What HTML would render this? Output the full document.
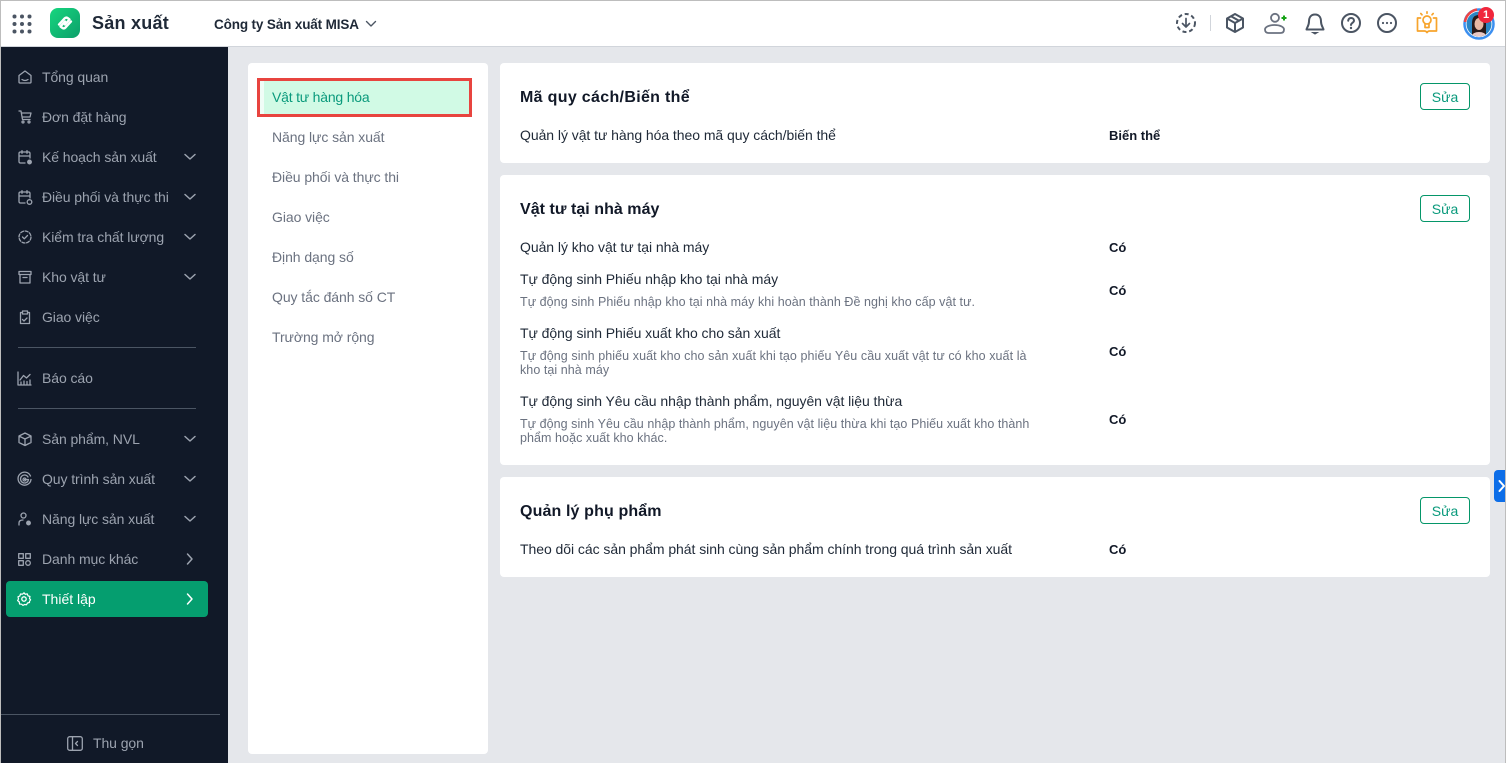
<!DOCTYPE html>
<html lang="vi"><head><meta charset="utf-8"><title>Sản xuất</title>
<style>
html,body{margin:0;padding:0}
body{width:1506px;height:763px;overflow:hidden;position:relative;background:#e5e7eb;font-family:"Liberation Sans",sans-serif;font-size:14px;color:#1f2937}
.a{position:absolute;white-space:nowrap;line-height:16px}
.box{position:absolute}
.side{color:#9ca3af;letter-spacing:-.08px;left:42px}
.sub{color:#6b7280;font-size:12.5px;letter-spacing:.06px;left:520px;line-height:14px}
.lbl{color:#1f2937;letter-spacing:-.05px;left:520px}
.val{color:#111827;font-weight:bold;font-size:13px;left:1109px;letter-spacing:0;margin-top:1px}
.nav{color:#6b7280;letter-spacing:-.07px;left:272px}
.h{color:#111827;font-weight:bold;font-size:16px;left:520px;letter-spacing:.32px;line-height:20px;margin-top:1px}
.card{position:absolute;left:500px;width:990px;background:#fff;border-radius:4px}
.btn{position:absolute;left:1420px;width:48px;height:25px;border:1px solid #059669;border-radius:4px;background:#fff;color:#0a9a7c;text-align:center;line-height:26px;font-size:14px}
svg{position:absolute;overflow:visible;fill:none}
.si{stroke:#9ca3af;stroke-width:1.3;stroke-linecap:round;stroke-linejoin:round}
.ti{stroke:#4b5563;stroke-width:2;stroke-linecap:round;stroke-linejoin:round}
</style></head><body>

<div class="box" style="left:0;top:0;width:1506px;height:46px;background:#fff"></div>
<div class="box" style="left:0;top:46px;width:1506px;height:1px;background:#d1d5db"></div>
<div class="box" style="left:1px;top:47px;width:227px;height:716px;background:#111928"></div>

<svg style="left:12px;top:14px" width="20" height="20"><g fill="#4b5563"><circle cx="2.5" cy="2.5" r="2"/><circle cx="10" cy="2.5" r="2"/><circle cx="17.5" cy="2.5" r="2"/><circle cx="2.5" cy="10" r="2"/><circle cx="10" cy="10" r="2"/><circle cx="17.5" cy="10" r="2"/><circle cx="2.5" cy="17.5" r="2"/><circle cx="10" cy="17.5" r="2"/><circle cx="17.5" cy="17.5" r="2"/></g></svg>
<svg style="left:50px;top:8px" width="30" height="30"><defs><linearGradient id="lg" x1="0" y1="0" x2="1" y2="1"><stop offset="0" stop-color="#16d67f"/><stop offset="1" stop-color="#0d9f6a"/></linearGradient></defs><rect width="30" height="30" rx="8" fill="url(#lg)"/><path d="M9 16.500 14.500 10.500Q16 9 17.500 10L19.500 11.500 15 16.500M21 13.500 15.500 19.500Q14 21 12.500 20L10.500 18.500 15 13.500" stroke="#fff" stroke-width="2.400" stroke-linecap="round" stroke-linejoin="round"/></svg>
<div class="a" style="left:92px;top:12px;font-size:18px;font-weight:bold;line-height:22px;color:#1f2937;letter-spacing:.25px">Sản xuất</div>
<div class="a" style="left:214px;top:17px;font-size:13.5px;font-weight:bold;letter-spacing:-.14px;color:#1f2937">Công ty Sản xuất MISA</div>
<svg style="left:366px;top:20px" width="10" height="8"><path d="M.5 1.500 5 6l4.500-4.500" stroke="#4b5563" stroke-width="1.400" stroke-linecap="round" stroke-linejoin="round"/></svg>

<!-- top right icons -->
<svg style="left:1176px;top:13px" width="20" height="20"><circle cx="10" cy="10" r="9" class="ti" stroke-width="2" stroke-dasharray="4 2.800" style="stroke-linecap:butt"/><path d="M10 5.500v8.500M6.500 10.500 10 14l3.500-3.500" class="ti" style="stroke-width:1.700"/></svg>
<div class="box" style="left:1210px;top:15px;width:1px;height:16px;background:#d1d5db"></div>
<svg style="left:1225px;top:13px" width="20" height="20"><path d="M10 1 18 5.500v9L10 19 2 14.500v-9zM2.500 5.800 10 10l7.500-4.200M10 10v8.500M6 3.300l8 4.500" class="ti"/></svg>
<svg style="left:1264px;top:12px" width="24" height="24"><circle cx="11" cy="5.800" r="4" stroke="#6b7280" stroke-width="1.800"/><path d="M1 17.500C1 15 5 13 10.500 13S20 15 20 17.500 18.500 21 16.500 21H4.500C2.500 21 1 20 1 17.500Z" stroke="#6b7280" stroke-width="1.800"/><path d="M20 3.500v5M17.500 6h5" stroke="#17a317" stroke-width="2"/></svg>
<svg style="left:1305px;top:13px" width="20" height="22"><path d="M10 1.500C5.500 1.500 4 5 4 8.500 4 13 1.500 15 1.500 16.500H18.500C18.500 15 16 13 16 8.500 16 5 14.500 1.500 10 1.500Z" class="ti"/><path d="M7.500 19.500h5L10 21z" fill="#4b5563" stroke="#4b5563"/></svg>
<svg style="left:1341px;top:13px" width="20" height="20"><circle cx="10" cy="10" r="9" class="ti"/><path d="M7.200 7.700C7.300 5.900 8.600 5 10.100 5 11.800 5 13 6.100 13 7.600 13 9.800 10 9.800 10 12" class="ti"/><circle cx="10" cy="15" r="1.200" fill="#4b5563"/></svg>
<svg style="left:1377px;top:13px" width="20" height="20"><circle cx="10" cy="10" r="9" class="ti"/><g fill="#4b5563"><circle cx="6" cy="10" r="1.100"/><circle cx="10" cy="10" r="1.100"/><circle cx="14" cy="10" r="1.100"/></g></svg>
<svg style="left:1416px;top:11px" width="22" height="24"><g stroke="#f7a42c" stroke-width="1.700" stroke-linecap="round" stroke-linejoin="round"><circle cx="11" cy="9" r="4"/><path d="M9 13v3.500h4V13M11 .8v1.500M4.800 2.500 6 3.800M17.200 2.500 16 3.800M4.500 7H1.500V20H8.500Q10 20 11 21.500 12 20 13.500 20H20.500V7H17.500"/></g></svg>

<svg style="left:1463px;top:8px" width="32" height="32"><defs><clipPath id="av"><circle cx="16" cy="16" r="12.500"/></clipPath></defs><circle cx="16" cy="16" r="14.500" stroke="#3b8ff0" stroke-width="2.500"/><path d="M2 14A14.500 14.500 0 0 1 14 1.500" stroke="#ef4444" stroke-width="2.500"/><g clip-path="url(#av)"><rect width="32" height="32" fill="#2a86c4"/><path d="M9 30V15Q9 7 16 7T23 15V30Z" fill="#2a1a18"/><ellipse cx="16" cy="16" rx="4.500" ry="6" fill="#e9b9a3"/><path d="M7 32Q8 24 16 24T25 32Z" fill="#e8c8c4"/></g></svg>
<div class="a" style="left:1478px;top:7px;width:16px;height:16px;border-radius:50%;background:#f0263c;color:#fff;font-size:11px;font-weight:bold;text-align:center;line-height:16px">1</div>

<!-- sidebar -->
<svg class="si" style="left:18px;top:70px" width="14" height="14"><path d="M1 5.500 7 1l6 4.500V12Q13 13 12 13H2Q1 13 1 12ZM4 9.500Q7 11.500 10 9.500"/></svg>
<div class="a side" style="top:69px">Tổng quan</div>
<svg class="si" style="left:18px;top:110px" width="14" height="14"><path d="M1 1h2l1.500 8.500H12M3.500 3H13l-1 4H4.300"/><circle cx="5" cy="12" r="1"/><circle cx="11" cy="12" r="1"/></svg>
<div class="a side" style="top:109px">Đơn đặt hàng</div>
<svg class="si" style="left:18px;top:150px" width="15" height="15"><path d="M7 13H2.500Q1 13 1 11.500V3.500Q1 2 2.500 2h8Q12 2 12 3.500V8M1 6h11M4 .7v2.600M9 .7v2.600"/><circle cx="11.500" cy="12" r="1.800" fill="#9ca3af"/></svg>
<div class="a side" style="top:149px">Kế hoạch sản xuất</div>
<svg class="si" style="left:18px;top:190px" width="15" height="15"><path d="M7 13H2.500Q1 13 1 11.500V3.500Q1 2 2.500 2h8Q12 2 12 3.500V8M1 6h11M4 .7v2.600M9 .7v2.600"/><circle cx="11.500" cy="12" r="2.300"/></svg>
<div class="a side" style="top:189px">Điều phối và thực thi</div>
<svg class="si" style="left:18px;top:230px" width="14" height="14"><circle cx="7" cy="7" r="6" stroke-dasharray="3 1.700"/><path d="M4.500 7 6.300 8.800 9.500 5.500"/></svg>
<div class="a side" style="top:229px">Kiểm tra chất lượng</div>
<svg class="si" style="left:18px;top:270px" width="14" height="14"><path d="M1 1.500h12v3H1zM2 4.500V13h10V4.500M5 7.500h4"/></svg>
<div class="a side" style="top:269px">Kho vật tư</div>
<svg class="si" style="left:18px;top:310px" width="14" height="15"><path d="M4 2.500H2.500V13.500H11.500V2.500H10M4.500 1h5v3h-5zM4.500 9.500l1.500 1.500 3-3"/></svg>
<div class="a side" style="top:309px">Giao việc</div>
<div class="box" style="left:18px;top:347px;width:178px;height:1px;background:#4b5563"></div>
<svg class="si" style="left:17px;top:371px" width="15" height="15"><path d="M1 1v13h13M3 9l3.500-4.500L9.500 7 13 3.500M4 14v-3M7 14v-4M10 14v-3.500M13 14v-5"/></svg>
<div class="a side" style="top:370px">Báo cáo</div>
<div class="box" style="left:18px;top:408px;width:178px;height:1px;background:#4b5563"></div>
<svg class="si" style="left:18px;top:432px" width="14" height="14"><path d="M7 1 13 4v6.500L7 13.500 1 10.500V4zM1.300 4.200 7 7l5.700-2.800M7 7v6"/></svg>
<div class="a side" style="top:431px">Sản phẩm, NVL</div>
<svg class="si" style="left:17px;top:472px" width="15" height="15"><path d="M13.500 4A6.500 6.500 0 1 0 14 7.500M11 5A4 4 0 1 0 11.500 7.500H7.500"/><circle cx="7.500" cy="7.500" r="1.500"/></svg>
<div class="a side" style="top:471px">Quy trình sản xuất</div>
<svg class="si" style="left:18px;top:512px" width="15" height="15"><circle cx="5.500" cy="3.500" r="2.500"/><path d="M1 13V11Q1 8 5 8"/><circle cx="10.500" cy="11" r="1.800" fill="#9ca3af"/></svg>
<div class="a side" style="top:511px">Năng lực sản xuất</div>
<svg class="si" style="left:18px;top:553px" width="13" height="13"><rect x=".7" y=".7" width="4.600" height="4.600"/><rect x="7.700" y=".7" width="4.600" height="4.600"/><rect x=".7" y="7.700" width="4.600" height="4.600"/><circle cx="10" cy="10" r="2.300"/></svg>
<div class="a side" style="top:551px">Danh mục khác</div>
<div class="box" style="left:6px;top:581px;width:202px;height:36px;background:#059e6f;border-radius:4px"></div>
<svg style="left:17px;top:592px" width="14" height="14"><circle cx="7" cy="7" r="2.200" stroke="#fff" stroke-width="1.300"/><path d="M7 .8 8.300 2.300 10.300 1.900 11 3.800 13 4.500 12.500 6.500 13.600 7.800 12.500 9.300 12.500 10.500 10.500 11 9.500 12.800 7.500 12.500 6 13.400 4.500 12.200 2.500 12 2.300 10 .6 8.500 1.500 7 1 4.800 2.800 4 3.500 2 5.500 2.200Z" stroke="#fff" stroke-width="1.200" stroke-linejoin="round"/></svg>
<div class="a side" style="top:591px;color:#fff;letter-spacing:0">Thiết lập</div>

<svg style="left:184px;top:153px" width="12" height="8"><path d="M1 1.500 6 6l5-4.500" stroke="#9ca3af" stroke-width="1.500" stroke-linecap="round" stroke-linejoin="round"/></svg>
<svg style="left:184px;top:193px" width="12" height="8"><path d="M1 1.500 6 6l5-4.500" stroke="#9ca3af" stroke-width="1.500" stroke-linecap="round" stroke-linejoin="round"/></svg>
<svg style="left:184px;top:233px" width="12" height="8"><path d="M1 1.500 6 6l5-4.500" stroke="#9ca3af" stroke-width="1.500" stroke-linecap="round" stroke-linejoin="round"/></svg>
<svg style="left:184px;top:273px" width="12" height="8"><path d="M1 1.500 6 6l5-4.500" stroke="#9ca3af" stroke-width="1.500" stroke-linecap="round" stroke-linejoin="round"/></svg>
<svg style="left:184px;top:435px" width="12" height="8"><path d="M1 1.500 6 6l5-4.500" stroke="#9ca3af" stroke-width="1.500" stroke-linecap="round" stroke-linejoin="round"/></svg>
<svg style="left:184px;top:475px" width="12" height="8"><path d="M1 1.500 6 6l5-4.500" stroke="#9ca3af" stroke-width="1.500" stroke-linecap="round" stroke-linejoin="round"/></svg>
<svg style="left:184px;top:515px" width="12" height="8"><path d="M1 1.500 6 6l5-4.500" stroke="#9ca3af" stroke-width="1.500" stroke-linecap="round" stroke-linejoin="round"/></svg>
<svg style="left:186px;top:553px" width="8" height="12"><path d="M1.500 1 6 6l-4.500 5" stroke="#9ca3af" stroke-width="1.500" stroke-linecap="round" stroke-linejoin="round"/></svg>
<svg style="left:186px;top:593px" width="8" height="12"><path d="M1.500 1 6 6l-4.500 5" stroke="#fff" stroke-width="1.500" stroke-linecap="round" stroke-linejoin="round"/></svg>

<div class="box" style="left:1px;top:714px;width:219px;height:1px;background:#4b5563"></div>
<svg style="left:67px;top:736px" width="16" height="15"><rect x=".7" y=".7" width="14.600" height="13.600" rx="2" stroke="#9ca3af" stroke-width="1.300"/><path d="M5.500 1v13M10.500 5.500 8.500 7.500l2 2" stroke="#9ca3af" stroke-width="1.300" stroke-linecap="round" stroke-linejoin="round"/></svg>
<div class="a" style="left:93px;top:735px;color:#9ca3af;letter-spacing:-.08px">Thu gọn</div>

<!-- left nav panel -->
<div class="box" style="left:248px;top:63px;width:240px;height:691px;background:#fff;border-radius:4px"></div>
<div class="box" style="left:257px;top:78px;width:209px;height:33px;border:3px solid #e8443f;background:#d1fae5;box-shadow:inset 4px 0 0 #f0fdf7"></div>
<div class="a nav" style="top:89px;color:#0a9a7c;letter-spacing:-.2px">Vật tư hàng hóa</div>
<div class="a nav" style="top:129px">Năng lực sản xuất</div>
<div class="a nav" style="top:169px">Điều phối và thực thi</div>
<div class="a nav" style="top:209px">Giao việc</div>
<div class="a nav" style="top:249px">Định dạng số</div>
<div class="a nav" style="top:289px">Quy tắc đánh số CT</div>
<div class="a nav" style="top:329px">Trường mở rộng</div>

<!-- cards -->
<div class="card" style="top:63px;height:100px"></div>
<div class="a h" style="top:87px">Mã quy cách/Biến thể</div>
<div class="btn" style="top:83px">Sửa</div>
<div class="a lbl" style="top:127px">Quản lý vật tư hàng hóa theo mã quy cách/biến thể</div>
<div class="a val" style="top:127px">Biến thể</div>

<div class="card" style="top:175px;height:290px"></div>
<div class="a h" style="top:199px;letter-spacing:.04px">Vật tư tại nhà máy</div>
<div class="btn" style="top:195px">Sửa</div>
<div class="a lbl" style="top:239px">Quản lý kho vật tư tại nhà máy</div>
<div class="a val" style="top:239px">Có</div>
<div class="a lbl" style="top:271px">Tự động sinh Phiếu nhập kho tại nhà máy</div>
<div class="a sub" style="top:295px">Tự động sinh Phiếu nhập kho tại nhà máy khi hoàn thành Đề nghị kho cấp vật tư.</div>
<div class="a val" style="top:282px">Có</div>
<div class="a lbl" style="top:325px">Tự động sinh Phiếu xuất kho cho sản xuất</div>
<div class="a sub" style="top:349px;letter-spacing:.08px">Tự động sinh phiếu xuất kho cho sản xuất khi tạo phiếu Yêu cầu xuất vật tư có kho xuất là</div>
<div class="a sub" style="top:363px">kho tại nhà máy</div>
<div class="a val" style="top:343px">Có</div>
<div class="a lbl" style="top:393px">Tự động sinh Yêu cầu nhập thành phẩm, nguyên vật liệu thừa</div>
<div class="a sub" style="top:417px;letter-spacing:.05px">Tự động sinh Yêu cầu nhập thành phẩm, nguyên vật liệu thừa khi tạo Phiếu xuất kho thành</div>
<div class="a sub" style="top:431px">phẩm hoặc xuất kho khác.</div>
<div class="a val" style="top:411px">Có</div>

<div class="card" style="top:477px;height:100px"></div>
<div class="a h" style="top:501px;letter-spacing:.13px">Quản lý phụ phẩm</div>
<div class="btn" style="top:497px">Sửa</div>
<div class="a lbl" style="top:541px">Theo dõi các sản phẩm phát sinh cùng sản phẩm chính trong quá trình sản xuất</div>
<div class="a val" style="top:541px">Có</div>

<!-- right handle -->
<div class="box" style="left:1494px;top:470px;width:12px;height:32px;background:#0d6ee8;border-radius:4px 0 0 4px"></div>
<svg style="left:1498px;top:480px" width="8" height="12"><path d="M1.500 1 6 6l-4.500 5" stroke="#fff" stroke-width="2" stroke-linecap="round" stroke-linejoin="round"/></svg>

<!-- frame -->
<div class="box" style="left:0;top:0;width:1506px;height:1px;background:#bdbdbd"></div>
<div class="box" style="left:0;top:0;width:1px;height:763px;background:#bdbdbd"></div>
<div class="box" style="left:1505px;top:0;width:1px;height:763px;background:#bdbdbd"></div>
</body></html>
